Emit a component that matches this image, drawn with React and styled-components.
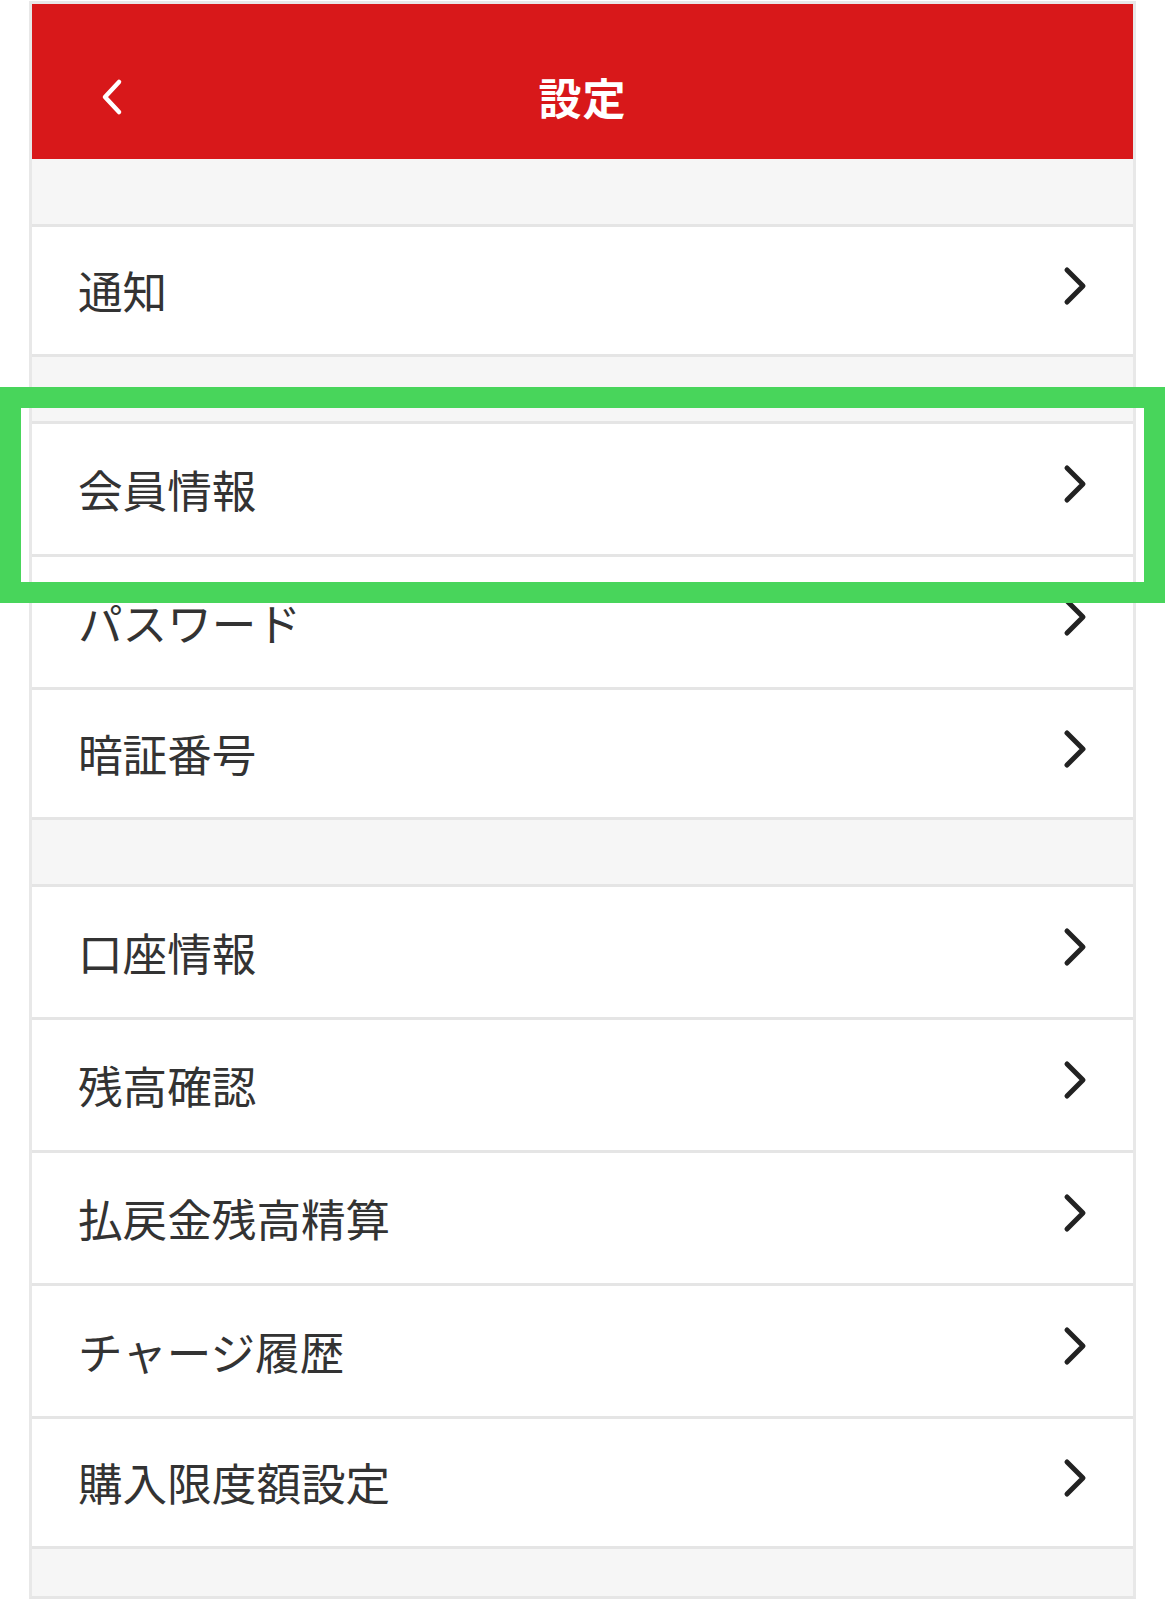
import React from "react";
import styled, { createGlobalStyle } from "styled-components";

const GlobalStyle = createGlobalStyle`
  html, body {
    margin: 0;
    padding: 0;
    background: #ffffff;
  }
  body {
    font-family: "Noto Sans CJK JP", "Noto Sans", sans-serif;
  }
`;

const Page = styled.div`
  position: relative;
  width: 1165px;
  padding-top: 1px;
`;

const Frame = styled.div`
  margin-left: 29px;
  width: 1101px;
  border: 3px solid #e8e8e8;
  border-bottom-color: #e6e6e6;
  background: #f6f6f6;
  display: flex;
  flex-direction: column;
`;

const Header = styled.header`
  height: 155px;
  box-sizing: border-box;
  padding-top: 30px;
  background: #d8181a;
  display: flex;
  align-items: center;
  position: relative;
`;

const BackButton = styled.button`
  position: absolute;
  left: 66px;
  top: 71px;
  width: 28px;
  height: 44px;
  padding: 0;
  border: none;
  background: transparent;
  display: flex;
  align-items: center;
  justify-content: center;
`;

const Title = styled.h1`
  flex: 1;
  margin: 0;
  text-align: center;
  color: #ffffff;
  font-size: 43px;
  font-weight: 700;
  line-height: 1;
  letter-spacing: 1px;
`;

const Gap = styled.div`
  height: ${(p) => p.$h}px;
  background: #f6f6f6;
`;

const Group = styled.ul`
  list-style: none;
  margin: 0;
  padding: 0;
  border-top: 3px solid #e5e5e5;
  border-bottom: 3px solid #e5e5e5;
  background: #ffffff;
`;

const Row = styled.li`
  height: 130px;
  box-sizing: border-box;
  padding: 0 44px 0 46px;
  display: flex;
  align-items: center;
  justify-content: space-between;
  background: #ffffff;
  & + & {
    border-top: 3px solid #e5e5e5;
    height: 133px;
  }
  &:last-child {
    height: 127px;
  }
  & + &:last-child {
    height: 130px;
  }
`;

const Label = styled.span`
  font-size: 44.6px;
  color: #333333;
  line-height: 1;
  font-weight: 400;
`;

const Chevron = styled.svg`
  width: 28px;
  height: 44px;
  margin-bottom: 8px;
  flex-shrink: 0;
`;

const Highlight = styled.div`
  position: absolute;
  left: 0;
  top: 387px;
  width: 1165px;
  height: 216px;
  box-sizing: border-box;
  border: 21px solid #48d55b;
  pointer-events: none;
`;

const ChevronRight = () => (
  <Chevron viewBox="0 0 28 44">
    <path
      d="M6 5 L22 21 L6 37"
      fill="none"
      stroke="#222222"
      strokeWidth="5"
      strokeLinecap="round"
      strokeLinejoin="round"
    />
  </Chevron>
);

const groups = [
  ["通知"],
  ["会員情報", "パスワード", "暗証番号"],
  ["口座情報", "残高確認", "払戻金残高精算", "チャージ履歴", "購入限度額設定"],
];

export default function App() {
  return (
    <>
      <GlobalStyle />
      <Page>
        <Frame>
          <Header>
            <BackButton aria-label="戻る">
              <svg width="28" height="44" viewBox="0 0 28 44">
                <path
                  d="M21 7 L7 22 L21 37"
                  fill="none"
                  stroke="#ffffff"
                  strokeWidth="4.5"
                  strokeLinecap="round"
                  strokeLinejoin="round"
                />
              </svg>
            </BackButton>
            <Title>設定</Title>
          </Header>
          <Gap $h={65} />
          {groups.map((items, gi) => (
            <React.Fragment key={gi}>
              {gi > 0 && <Gap $h={64} />}
              <Group>
                {items.map((t) => (
                  <Row key={t}>
                    <Label>{t}</Label>
                    <ChevronRight />
                  </Row>
                ))}
              </Group>
            </React.Fragment>
          ))}
          <Gap $h={47} />
        </Frame>
        <Highlight />
      </Page>
    </>
  );
}
